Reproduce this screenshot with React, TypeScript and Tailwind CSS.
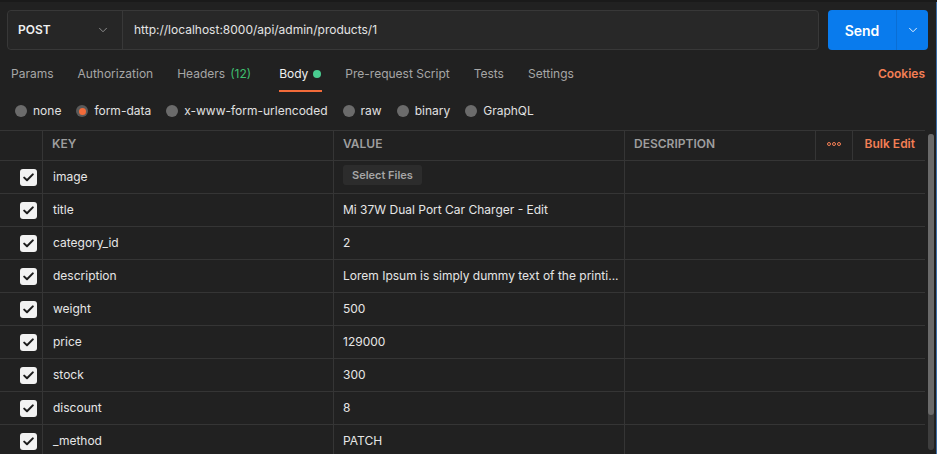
import { ChevronDown } from "lucide-react";

const rows = [
  { key: "image", value: "", file: true },
  { key: "title", value: "Mi 37W Dual Port Car Charger - Edit" },
  { key: "category_id", value: "2" },
  { key: "description", value: "Lorem Ipsum is simply dummy text of the printi..." },
  { key: "weight", value: "500" },
  { key: "price", value: "129000" },
  { key: "stock", value: "300" },
  { key: "discount", value: "8" },
  { key: "_method", value: "PATCH" },
];

const tabs = ["Params", "Authorization", "Headers", "Body", "Pre-request Script", "Tests", "Settings"];
const modes = ["none", "form-data", "x-www-form-urlencoded", "raw", "binary", "GraphQL"];

function Check() {
  return (
    <div className="w-[17px] h-[17px] rounded-[3px] bg-[#f2f2f2] flex items-center justify-center">
      <svg width="11" height="9" viewBox="0 0 11 9" fill="none">
        <path d="M1.2 4.6 4 7.3 9.8 1.4" stroke="#1c1c1c" strokeWidth="2" strokeLinecap="round" strokeLinejoin="round" />
      </svg>
    </div>
  );
}

export default function App() {
  return (
    <div
      className="w-[937px] h-[454px] overflow-hidden bg-[#212121] text-[12px] text-[#e6e6e6] border-t-2 border-[#1a1a1a] relative"
      style={{ fontFamily: "Inter, 'Noto Sans', sans-serif" }}
    >
      {/* Request bar */}
      <div className="flex pl-[7px] pr-[9px] pt-[8px] gap-[9px]">
        <div className="flex-1 h-[40px] flex rounded-[4px] border border-[#383838] bg-[#282828]">
          <div className="w-[115px] flex items-center justify-between pl-[10px] pr-[12px] border-r border-[#383838] bg-[#262626] rounded-l-[4px]">
            <span className="font-semibold text-[12px] text-[#f0f0f0]">POST</span>
            <ChevronDown size={14} strokeWidth={1.5} className="text-[#9a9a9a]" />
          </div>
          <div className="flex items-center pl-[11px] text-[#e4e4e4]">http://localhost:8000/api/admin/products/1</div>
        </div>
        <div className="w-[100px] h-[40px] flex rounded-[4px] bg-[#097bed] text-white">
          <div className="w-[68px] flex items-center justify-center font-semibold text-[14px]">Send</div>
          <div className="flex-1 flex items-center justify-center border-l border-[#0a6ed4]">
            <ChevronDown size={14} strokeWidth={1.5} />
          </div>
        </div>
      </div>

      {/* Tabs */}
      <div className="flex items-center h-[38px] mt-[5px] pl-[11px] pr-[12px]">
        {tabs.map((t) => (
          <div
            key={t}
            className={`relative h-full flex items-center ${t === "Headers" ? "mr-[28px]" : "mr-[24px]"} ${
              t === "Body" ? "text-[#f0f0f0]" : "text-[#a6a6a6]"
            }`}
          >
            {t}
            {t === "Headers" && <span className="ml-[5px] text-[#3fbf6f]">(12)</span>}
            {t === "Body" && <span className="ml-[5px] w-[8px] h-[8px] rounded-full bg-[#49cc90]" />}
            {t === "Body" && <div className="absolute left-0 right-[-1px] bottom-[1px] h-[2px] bg-[#f26b3a]" />}
          </div>
        ))}
        <div className="ml-auto text-[#f37f55] font-semibold">Cookies</div>
      </div>

      {/* Body modes */}
      <div className="flex items-center h-[36px] pl-[15px]">
        {modes.map((m) => (
          <div key={m} className="flex items-center mr-[15px]">
            {m === "form-data" ? (
              <span className="w-[12px] h-[12px] rounded-full bg-[#5a5a5a] flex items-center justify-center">
                <span className="w-[7px] h-[7px] rounded-full bg-[#f26b3a]" />
              </span>
            ) : (
              <span className="w-[12px] h-[12px] rounded-full bg-[#6b6b6b]" />
            )}
            <span className="ml-[6px] text-[#e0e0e0]">{m}</span>
          </div>
        ))}
      </div>

      {/* Table */}
      <div className="mt-[1px] flex">
        <div className="w-[925px]">
          <div className="flex h-[31px] border-y border-[#353535] text-[12px] font-semibold text-[#9e9e9e]">
            <div className="w-[43px] border-r border-[#353535]" />
            <div className="w-[291px] border-r border-[#353535] flex items-center pl-[9px] pb-[4px]">KEY</div>
            <div className="w-[291px] border-r border-[#353535] flex items-center pl-[9px] pb-[4px]">VALUE</div>
            <div className="w-[191px] border-r border-[#353535] flex items-center pl-[9px] pb-[4px]">DESCRIPTION</div>
            <div className="w-[37px] border-r border-[#353535] flex items-center justify-center pb-[3px]">
              <svg width="14" height="4" viewBox="0 0 14 4" fill="none" stroke="#f37f55" strokeWidth="1">
                <circle cx="2" cy="2" r="1.5" />
                <circle cx="7" cy="2" r="1.5" />
                <circle cx="12" cy="2" r="1.5" />
              </svg>
            </div>
            <div className="flex-1 flex items-center justify-end pr-[10px] pb-[4px] text-[#f37f55]">Bulk Edit</div>
          </div>
          {rows.map((r) => (
            <div key={r.key} className="flex h-[33px] border-b border-[#353535]">
              <div className="w-[43px] border-r border-[#353535] flex items-center justify-end pr-[5px]">
                <Check />
              </div>
              <div className="w-[291px] border-r border-[#353535] flex items-center pl-[10px]">{r.key}</div>
              <div className="w-[291px] border-r border-[#353535] flex items-center pl-[9px] min-w-0">
                {r.file ? (
                  <span className="h-[20px] px-[9px] -mt-[4px] flex items-center rounded-[3px] bg-[#2c2c2c] text-[11px] font-semibold text-[#a6a6a6]">
                    Select Files
                  </span>
                ) : (
                  <span className="whitespace-nowrap">{r.value}</span>
                )}
              </div>
              <div className="flex-1" />
            </div>
          ))}
        </div>
        <div className="w-[12px] flex justify-center pt-[4px]">
          <div className="w-[6px] h-[316px] rounded-[3px] bg-[#3e3e3e] flex flex-col">
            <div className="h-[281px] rounded-[3px] bg-[#6a6a6a]" />
          </div>
        </div>
      </div>
      <div className="absolute right-0 top-0 bottom-0 w-px bg-[#3b6ea8]" />
    </div>
  );
}
